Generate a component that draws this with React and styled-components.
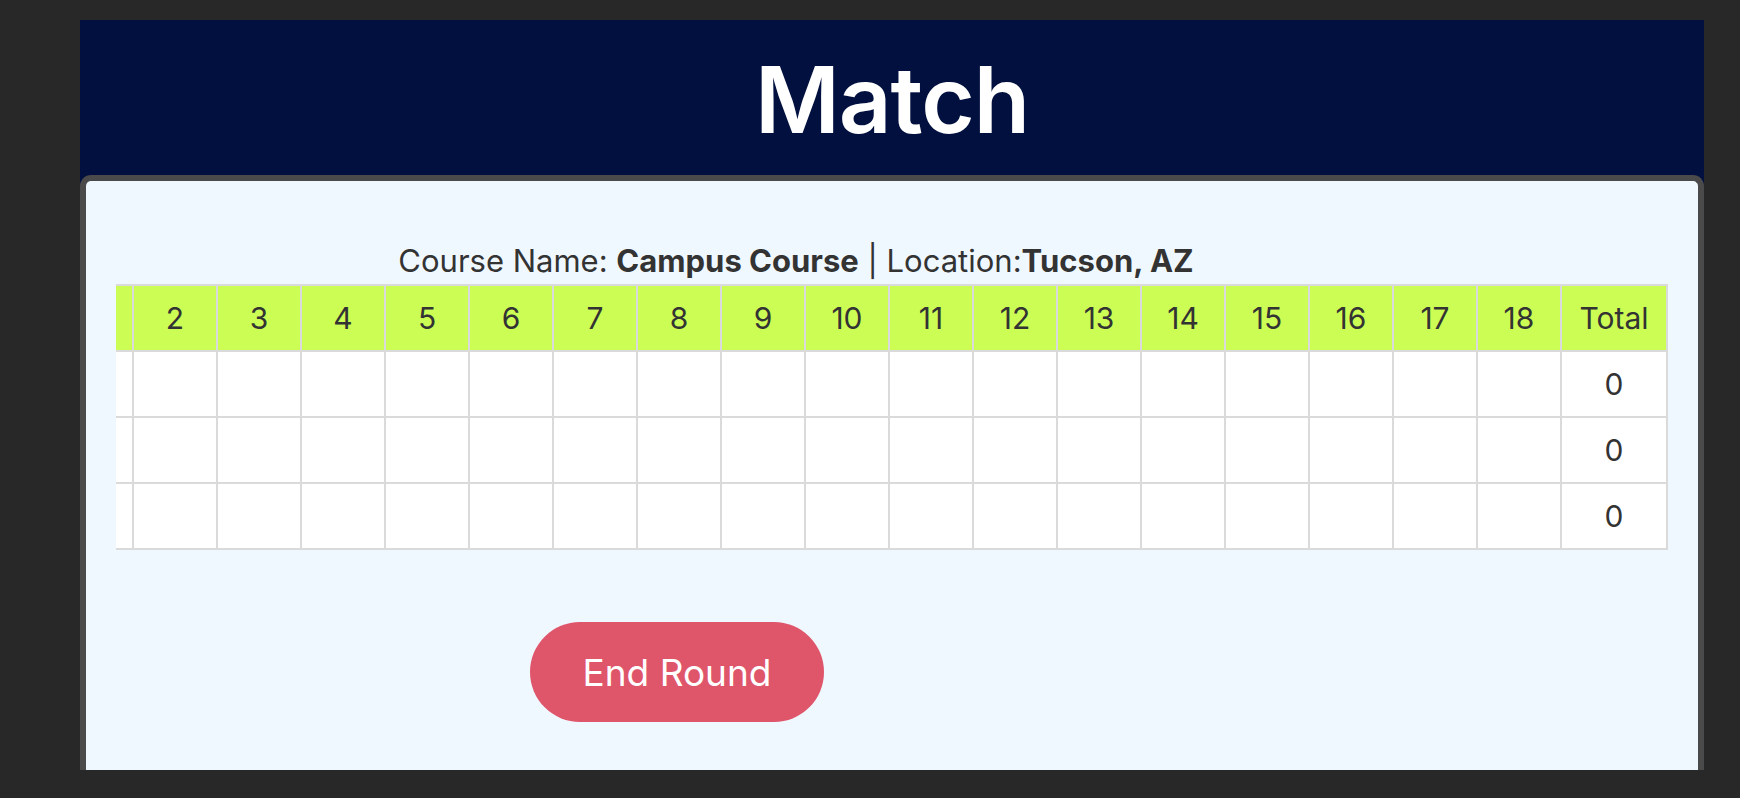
import React, { useLayoutEffect, useRef } from "react";
import styled, { createGlobalStyle } from "styled-components";

const GlobalStyle = createGlobalStyle`
  html, body {
    margin: 0;
    padding: 0;
    background: #282828;
  }
  body {
    font-family: Inter, "Noto Sans", "Liberation Sans", sans-serif;
    color: #333;
  }
  * { box-sizing: border-box; }
`;

const Page = styled.div`
  height: 798px;
  padding: 20px 36px 0 80px;
`;

const Frame = styled.div`
  height: 750px;
  background: #01103f;
  display: flex;
  flex-direction: column;
  overflow: hidden;
`;

const Header = styled.header`
  height: 155px;
  flex: none;
  display: flex;
  align-items: center;
  justify-content: center;
  padding-top: 5px;
`;

const Title = styled.h1`
  margin: 0;
  color: #fff;
  font-size: 92px;
  font-weight: 600;
  letter-spacing: -1px;
  line-height: 1.21;
`;

const Card = styled.main`
  flex: 1;
  background: #f0f8ff;
  border: 6px solid #4a4a4a;
  border-bottom: 0;
  border-radius: 11px 11px 0 0;
  padding: 61px 30px 0 30px;
`;

const ScoreScroll = styled.div`
  overflow-x: auto;
  scrollbar-width: none;
  &::-webkit-scrollbar { display: none; }
`;

const ScoreContent = styled.div`
  width: max-content;
`;

const CourseInfo = styled.p`
  margin: 0 0 4px 0;
  text-align: center;
  font-size: 31px;
  line-height: 38px;
  color: #333;

  b { font-weight: 700; }
`;

const ScoreGrid = styled.div`
  display: grid;
  grid-template-columns: 124px repeat(18, 84px) 106px;
  border-left: 2px solid #dadada;
  border-top: 2px solid #dadada;
`;

const Cell = styled.div`
  height: 66px;
  border-right: 2px solid #dadada;
  border-bottom: 2px solid #dadada;
  background: ${(p) => (p.$head ? "#ccfd55" : "#ffffff")};
  display: flex;
  align-items: center;
  justify-content: center;
  font-size: 30px;
  color: #333;
  white-space: nowrap;
  overflow: hidden;
`;

const ButtonRow = styled.div`
  margin-top: 72px;
  padding-left: 414px;
`;

const EndButton = styled.button`
  width: 294px;
  height: 100px;
  border: 0;
  border-radius: 50px;
  background: #df566b;
  color: #fff;
  font-family: Inter, "Noto Sans", "Liberation Sans", sans-serif;
  font-size: 37px;
  font-weight: 400;
  cursor: pointer;
`;

const holes = Array.from({ length: 18 }, (_, i) => i + 1);
const players = ["", "", ""];

export default function App() {
  const scrollRef = useRef(null);

  useLayoutEffect(() => {
    const el = scrollRef.current;
    if (el) el.scrollLeft = el.scrollWidth;
  }, []);

  return (
    <>
      <GlobalStyle />
      <Page>
        <Frame>
          <Header>
            <Title>Match</Title>
          </Header>
          <Card>
            <ScoreScroll ref={scrollRef}>
              <ScoreContent>
                <CourseInfo>
                  Course Name: <b>Campus Course</b> | Location:<b>Tucson, AZ</b>
                </CourseInfo>
                <ScoreGrid>
                  <Cell $head />
                  {holes.map((h) => (
                    <Cell $head key={`h${h}`}>{h}</Cell>
                  ))}
                  <Cell $head>Total</Cell>
                  {players.map((name, r) => (
                    <React.Fragment key={`r${r}`}>
                      <Cell>{name}</Cell>
                      {holes.map((h) => (
                        <Cell key={`c${r}-${h}`} />
                      ))}
                      <Cell>0</Cell>
                    </React.Fragment>
                  ))}
                </ScoreGrid>
              </ScoreContent>
            </ScoreScroll>
            <ButtonRow>
              <EndButton>End Round</EndButton>
            </ButtonRow>
          </Card>
        </Frame>
      </Page>
    </>
  );
}
